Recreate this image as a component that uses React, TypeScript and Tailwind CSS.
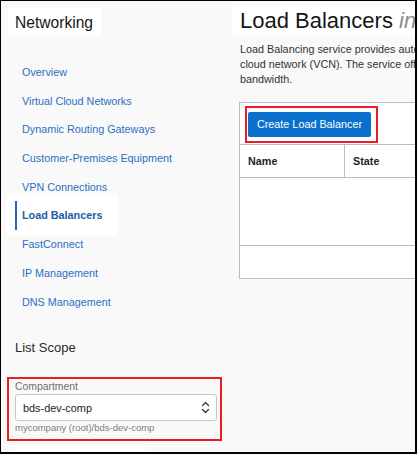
const navItems = [
  "Overview",
  "Virtual Cloud Networks",
  "Dynamic Routing Gateways",
  "Customer-Premises Equipment",
  "VPN Connections",
  "Load Balancers",
  "FastConnect",
  "IP Management",
  "DNS Management",
];

function UpDown() {
  return (
    <svg width="9" height="15" viewBox="0 0 9 15" fill="none" stroke="#333" strokeWidth="1.3" strokeLinecap="round" strokeLinejoin="round">
      <path d="M1.5 5.5 L4.5 2.5 L7.5 5.5" />
      <path d="M1.5 9.5 L4.5 12.5 L7.5 9.5" />
    </svg>
  );
}

export default function App() {
  return (
    <div className="w-[417px] h-[454px] overflow-hidden border-black border-l border-t border-r-2 border-b-2 bg-[#f9f9f9] font-['Liberation_Sans',Arial,sans-serif] flex">
      {/* Sidebar */}
      <div className="w-[224px] shrink-0 pl-[14px] flex flex-col">
        <div className="-ml-[7px] mt-[7px] w-[93px] h-[27px] bg-white pl-[7px] text-[15.6px] leading-[29px] text-[#161616]">
          Networking
        </div>
        <div className="mt-[10px] h-px w-[202px] bg-[#bcbec8]" />

        <div className="mt-[13px] flex flex-col">
          {navItems.map((item) =>
            item === "Load Balancers" ? (
              <div key={item} className="-ml-[9px] -my-[6px] pl-[9px] py-[6px] w-[112px] bg-white">
                <div className="h-[28.7px] leading-[28.7px] border-l-2 border-[#1f68b8] pl-[5px] text-[10.8px] font-bold text-[#1a5ea8] whitespace-nowrap">
                  {item}
                </div>
              </div>
            ) : (
              <div key={item} className="h-[28.7px] leading-[28.7px] pl-[7px] text-[10.8px] text-[#2a6fc2] whitespace-nowrap">
                {item}
              </div>
            )
          )}
        </div>

        <div className="mt-[22px] text-[13px] leading-[20px] text-[#2b2b2b]">List Scope</div>
        <div className="mt-[9px] h-px w-[202px] bg-[#bcbec8]" />

        <div className="mt-[10px] -ml-[8px] w-[215px] h-[64px] shrink-0 border-2 border-[#ea1c24] pl-[6px] pt-[1px]">
          <div className="text-[10.4px] leading-[13px] text-[#6e6e6e]">Compartment</div>
          <div className="mt-px w-[202px] h-[27px] bg-white border border-[#c6c6c6] rounded-[3px] flex items-center justify-between pl-[7px] pr-[6px]">
            <span className="text-[10.9px] text-[#1e1e1e]">bds-dev-comp</span>
            <UpDown />
          </div>
          <div className="mt-px text-[9.5px] leading-[12px] text-[#7d7d7d] whitespace-nowrap">
            mycompany (root)/bds-dev-comp
          </div>
        </div>
        <div className="mt-[3px] w-[130px] h-[10px] shrink-0 bg-white" />
      </div>

      {/* Main */}
      <div className="flex-1 min-w-0 pl-[7px] flex flex-col">
        <div className="mt-[5px] h-[29px] bg-white pl-[8px] text-[22px] leading-[29px] text-[#161616] whitespace-nowrap">
          Load Balancers <span className="italic text-[#8a8a8a]">in bds-dev-comp Compartment</span>
        </div>

        <div className="mt-[7px] pl-[8px] text-[10.8px] leading-[15px] text-[#333] whitespace-nowrap">
          <div>Load Balancing service provides automated traffic distribution from one entry point</div>
          <div>cloud network (VCN). The service offers a load balancer with your choice of a public</div>
          <div>bandwidth.</div>
        </div>

        <div className="mt-[15px] ml-[7px] w-[300px] shrink-0 bg-white border border-[#b8bec6]">
          <div className="pt-[3px] pb-px pl-[5px]">
            <div className="w-[133px] h-[37px] border-2 border-[#ea1c24] pl-px pt-[3px]">
              <button className="w-[123px] h-[25px] rounded-[2px] bg-[#0a70cc] text-white text-[10.8px] leading-[25px] text-center">
                Create Load Balancer
              </button>
            </div>
          </div>
          <div className="flex h-[34px] border-y border-[#b8bec6] text-[10.8px] font-bold text-[#1f1f1f]">
            <div className="w-[105px] border-r border-[#b8bec6] pl-[8px] leading-[32px]">Name</div>
            <div className="pl-[8px] leading-[32px]">State</div>
          </div>
          <div className="h-[68px] border-b border-[#b8bec6]" />
          <div className="h-[32px]" />
        </div>
      </div>
    </div>
  );
}
